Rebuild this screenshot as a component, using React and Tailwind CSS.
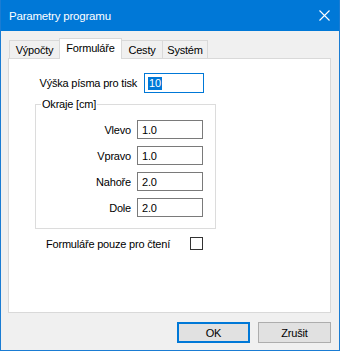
import React from "react";

const font = { fontFamily: '"Liberation Sans", "Segoe UI", Arial, sans-serif' };

function Tab({ label, active, className }) {
    if (active) {
        return (
            <div className={"relative z-10 h-[21px] bg-white border border-b-0 border-[#d9d9d9] flex items-start justify-center pt-[2px] whitespace-nowrap " + className}>
                {label}
            </div>
        );
    }
    return (
        <div className={"h-[18px] mb-[1px] bg-[#f0f0f0] border border-b-0 border-[#d9d9d9] flex items-center justify-center whitespace-nowrap " + className}>
            {label}
        </div>
    );
}

function MarginRow({ label, value }) {
    return (
        <div className="flex items-center">
            <div className="w-[95px] text-right whitespace-nowrap">{label}</div>
            <div className="ml-[6px] w-[66px] h-[19px] border border-[#7a7a7a] bg-white pl-[4px] flex items-center">
                {value}
            </div>
        </div>
    );
}

export default function App() {
    return (
        <div
            className="w-[340px] h-[351px] border border-[#1a7cd3] flex flex-col bg-[#f0f0f0] text-[11px] tracking-[-0.2px] leading-[14px] text-black select-none"
            style={font}
        >
            {/* Title bar */}
            <div className="h-[31px] -mt-px bg-[#0078d7] flex items-center justify-between pl-[8px] pr-[9px] text-white">
                <span className="text-[11.5px]">Parametry programu</span>
                <svg width="11" height="11" viewBox="0 0 11 11">
                    <path d="M0.5 0.5 L10.5 10.5 M10.5 0.5 L0.5 10.5" stroke="white" strokeWidth="1.1" />
                </svg>
            </div>

            <div className="flex-1 flex flex-col pl-[7px] pr-[8px] pt-[7px]">
                {/* Tabs */}
                <div className="flex items-end h-[21px] -mb-px ml-[1px]">
                    <Tab label="Výpočty" className="w-[51px]" />
                    <Tab label="Formuláře" active className="w-[63px] -ml-px" />
                    <Tab label="Cesty" className="w-[42px] -ml-px" />
                    <Tab label="Systém" className="w-[46px] -ml-px" />
                </div>

                {/* Panel */}
                <div className="h-[255px] bg-white border border-[#d9d9d9] flex flex-col">
                    <div className="flex items-center mt-[14px] ml-[26px]">
                        <div className="w-[102px] text-right whitespace-nowrap">Výška písma pro tisk</div>
                        <div className="ml-[7px] w-[60px] h-[20px] border border-[#0078d7] bg-white pl-[3px] flex items-center">
                            <span className="bg-[#0078d7] text-white leading-[13px] px-px">10</span>
                        </div>
                    </div>

                    <div className="relative mt-[11px] ml-[26px] w-[181px] h-[125px] border border-[#dcdcdc] pt-[15px] flex flex-col gap-[7px]">
                        <div className="absolute -top-[8px] left-[5px] bg-white px-[1px] whitespace-nowrap">Okraje [cm]</div>
                        <MarginRow label="Vlevo" value="1.0" />
                        <MarginRow label="Vpravo" value="1.0" />
                        <MarginRow label="Nahoře" value="2.0" />
                        <MarginRow label="Dole" value="2.0" />
                    </div>

                    <div className="flex items-center mt-[8px] ml-[37px] h-[13px]">
                        <div className="w-[144px] whitespace-nowrap">Formuláře pouze pro čtení</div>
                        <div className="w-[13px] h-[13px] border border-[#333333] bg-white" />
                    </div>
                </div>

                {/* Buttons */}
                <div className="flex justify-end gap-[8px] mt-[9px]">
                    <button className="w-[73px] h-[21px] border-2 border-[#0078d7] bg-[#e1e1e1] flex items-center justify-center">
                        OK
                    </button>
                    <button className="w-[73px] h-[21px] border border-[#adadad] bg-[#e1e1e1] flex items-center justify-center">
                        Zrušit
                    </button>
                </div>
            </div>
        </div>
    );
}
